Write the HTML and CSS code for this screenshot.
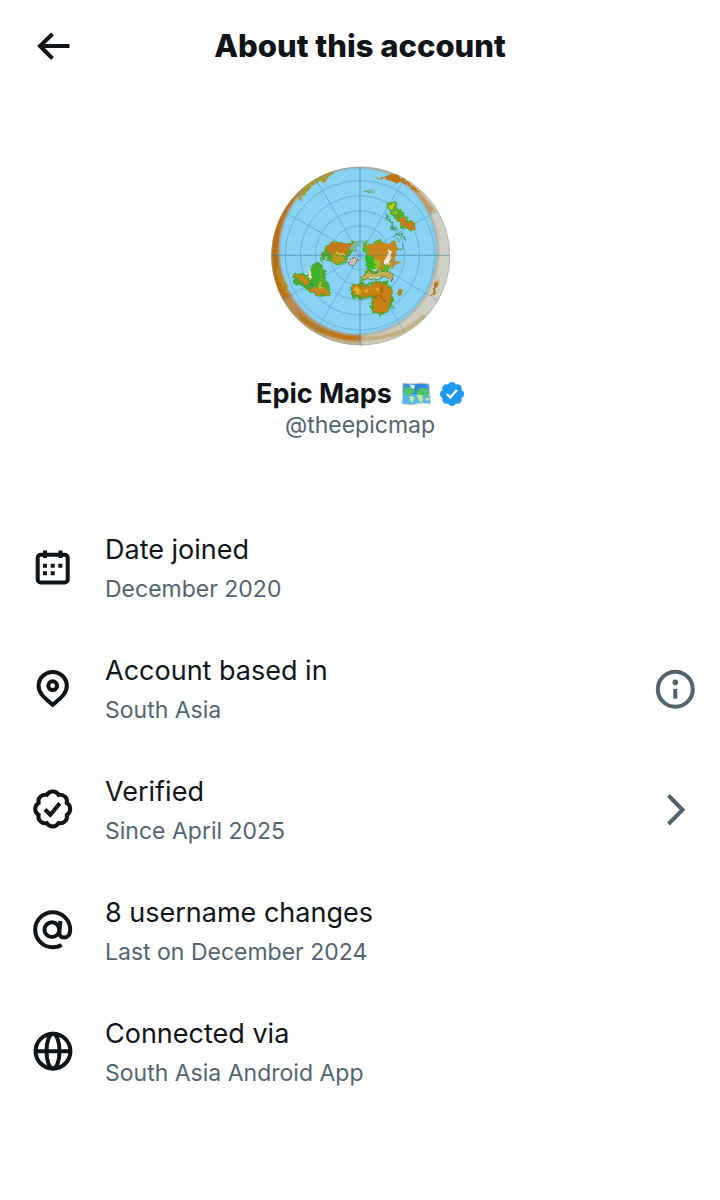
FILE: index.html
```html
<!DOCTYPE html>
<html lang="en">
<head>
<meta charset="utf-8">
<meta name="viewport" content="width=device-width, initial-scale=1">
<title>About this account</title>
<link rel="stylesheet" href="styles.css">
</head>
<body>
<header class="topbar">
  <button class="icon-button" type="button" aria-label="Back">
    <svg class="icon" viewBox="0 0 48 48" aria-hidden="true"><path d="M23.500 12 11 24l12.500 12.500M10.500 24h30"/></svg>
  </button>
  <h1 class="topbar-title">About this account</h1>
</header>
<main>
  <section class="profile">
    <svg class="avatar" viewBox="31 30 540 540" role="img" aria-label="Epic Maps profile picture">
      <defs>
        <clipPath id="disc"><circle cx="303" cy="300" r="268"/></clipPath>
        <filter id="soft" x="-5%" y="-5%" width="110%" height="110%"><feGaussianBlur stdDeviation="2.500"/></filter>
        <filter id="coast" x="-5%" y="-5%" width="110%" height="110%">
          <feTurbulence type="fractalNoise" baseFrequency=".06" numOctaves="2" seed="4" result="noise"/>
          <feDisplacementMap in="SourceGraphic" in2="noise" scale="22" xChannelSelector="R" yChannelSelector="G"/>
          <feGaussianBlur stdDeviation="1.500"/>
        </filter>
      </defs>
      <g clip-path="url(#disc)">
        <rect x="30" y="30" width="545" height="540" fill="#cfcfc3"/>
        <g filter="url(#soft)">
          <path d="M300 20H20V580H300L300 540 150 470 80 300Z" fill="#b98a48"/>
          <path d="M190 62C110 105 52 180 46 290c0 50 12 100 32 140" fill="none" stroke="#b9700f" stroke-width="22"/>
          <path d="M340 62c80 5 130 40 175 110" fill="none" stroke="#c79a62" stroke-width="26"/>
          <path d="M120 488c60 45 110 60 185 57" fill="none" stroke="#c1750f" stroke-width="20"/>
          <path d="M60 430c40 70 110 132 250 134" fill="none" stroke="#bdb896" stroke-width="12"/>
          <path d="M305 549c80 0 145-25 190-70" fill="none" stroke="#c4a878" stroke-width="12"/>
          <ellipse cx="296" cy="285" rx="238" ry="252" fill="#87d2f5" stroke="#a98f55" stroke-width="4"/>
        </g>
        <g filter="url(#coast)">
          <path d="M340 64l40 0 24-8 38 16 40 36-8 4-42-30-26-4-30-8z" fill="#bd7616"/>
          <path d="M200 50l30 0-38 24-26 8-46 52-6-6 20-40 30-28z" fill="#a79a32"/>
          <path d="M54 330l16 34 16 44 8 10-14-6-18-26-12-40z" fill="#b88a1c"/>
          <path d="M532 370l-20 54 12-8 12-36z" fill="#b77a19"/>
          <path d="M110 466l70 52 60 18-60-6-60-46z" fill="#a97c24"/>
        </g>
        <g fill="none" stroke="#4d99bd" stroke-width="2.500" opacity=".6">
          <circle cx="301" cy="298" r="44"/><circle cx="301" cy="298" r="89"/><circle cx="301" cy="298" r="134"/><circle cx="301" cy="298" r="179"/><circle cx="301" cy="298" r="224"/>
          <path d="M167 66 435 530M69 164 533 432M69 432 533 164M167 530 435 66"/>
          <path d="M301 30V568M33 298H572"/>
        </g>
        <g filter="url(#coast)">
          <path d="M194 282l8-18 24-8 30 4 30-6 12 8-8 12 6 6-14 10-10 4-6 14-10 12-12 8-22-8-18-2-4-18-4 14-8-8z" fill="#54a82f"/>
          <path d="M200 276l14-16 26 0 34 0 14 4-10 14-20 10-20 6-26 0z" fill="#c5791c"/>
          <path d="M214 298l32 0 8 14-10 10-24-6z" fill="#bd9a1f"/>
          <path d="M232 290l18-2 4 8-16 4z" fill="#d8bd28"/>
          <path d="M192 288l-8 18 2 14" fill="none" stroke="#5aaf6a" stroke-width="5"/>
          <path d="M268 322l14-16 12 2-6 14-14 6z" fill="#c9beb4" stroke="#97715f" stroke-width="3"/>
          <path d="M276 264l16-8 8 12-12 10 4 10-14 4-8-10 8-6z" fill="#75b99c"/>
          <path d="M302 262l18-8 10 8 22-10 20 10 26-4 14 14-2 24-14 20 14 10-12 10-10-4-8 20-20 2-8 14-24-2-24 14-4-12 18-12-6-12 16-10-8-24 4-14-14-12z" fill="#5fb22c"/>
          <path d="M316 262l22 4 22-6 44 0 8 20-6 30-14 20-24-6 0 18-22-10-4-24-14-12z" fill="#c9861d"/>
          <path d="M386 282l8 4-2 30-14 12-4-6 8-22z" fill="#eee8df"/>
          <path d="M318 294l18 6 10 22-12 22-14-10z" fill="#35b624"/>
          <path d="M342 312l16 2 4 18-14 10z" fill="#9ac027"/>
          <path d="M304 362l26-14 28 2 22-6 16 12 4 18-12-4-14-8-20 8-40 2z" fill="#c2ae50" stroke="#448d50" stroke-width="3"/>
          <path d="M388 320l18-12 14 14-14 6-8 12-10-8z" fill="#b2923c"/>
          <path d="M328 364l18 2 16-4M336 342l24 2" fill="none" stroke="#a9dff1" stroke-width="5"/>
          <path d="M270 402l6-16 24-6 24 4 20-6 36 0 16 12 0 22 6 24-4 22-16 16-24 2-20-8-6-20 4-20-12-6-22 6-18 0-12-12z" fill="#4fa22c"/>
          <path d="M276 398l8-10 38 0 22-6 38 2 10 16 4 36-6 22-14 12-22 0-14-10-4-20 6-16-16-8-24 4-20-4z" fill="#ca8017"/>
          <path d="M280 400l14-8 12 10-4 12-16 4zM316 400l12 2-4 12-12-2zM346 394l12 4-4 12z" fill="#e0b51c"/>
          <path d="M342 424l18-4 14 8 8 10M366 392l2 20" fill="none" stroke="#a36515" stroke-width="5"/>
          <ellipse cx="420" cy="410" rx="6" ry="9" fill="#a28e24"/>
          <path d="M380 146l18-10 12 8 4 12 14 4 10 20 16 14 12 10 2 16-14 10-24-14-14-20-14-14-14-14z" fill="#52ae2f"/>
          <path d="M386 146l14-4 6 12-12 8zM398 166l12 2 2 12z" fill="#d9c21e"/>
          <path d="M416 178l16 6 12 14 18 6 4 16-12 6-20-14-12-12z" fill="#c97c1c"/>
          <path d="M382 176l2 18 16 6-4 12 12 14M402 242l14-8 18 6 2 14M430 262l-6 16-14-2M412 246l6 12" fill="none" stroke="#3f9f6b" stroke-width="5"/>
          <path d="M308 108l16-8 20 2-12 4-14 2z" fill="#78a16b"/>
          <path d="M98 358l24-6 20 6 14-32 16-6 18 14 8 18 2 20 10 20 8 18-8 10-26 2-24-8-20-16-22-10-18-8z" fill="#4aac2d"/>
          <path d="M100 360l24-2 22 10 8 14-12 6-24-12zM146 400l26-10 24 6 16 16-4 6-34-2z" fill="#c98422"/>
          <path d="M148 338l10 12-4 18-10-6z" fill="#f0ddca"/>
          <path d="M164 332l14 6 0 14 12 22-12 10-14-16z" fill="#3bb52a"/>
          <path d="M186 340l6 30-6 6z" fill="#bfb524"/>
          <path d="M150 376l12 6-2 14-14-6z" fill="#229b4c"/>
          <path d="M174 382l14 0 10 16-20-4z" fill="#b9b827"/>
        </g>
        <path d="M301 30V568M33 298H572" stroke="#3f7180" stroke-width="2.500" opacity=".35"/>
      </g>
      <circle cx="303" cy="300" r="267" fill="none" stroke="#8d9e93" stroke-width="3" opacity=".5"/>
    </svg>
    <h2 class="name">
      <span>Epic Maps</span>
      <svg class="map-emoji" viewBox="0 0 30 24" role="img" aria-label="World map">
        <path d="M2 1l8 1 10-1 8 1 1.500 20-8.500-1-11 2-9-1z" fill="#5bb6ea"/>
        <path d="M2 1l8 1-.5 10L1.500 11zM20 1l8 1 .5 9-8.500 1z" fill="#3a92de"/>
        <path d="M10 2l10-1v11l-10.500 0z" fill="#2f86d6"/>
        <path d="M3 6l5-1 5 2 1 3-4 2-1 3-3-2-3-2zM15 10l4-4 8 1 1 5-3 3-3-2-4 1z" fill="#4cc569"/>
        <path d="M8 14l5 1-1 6-3-2zM16 13l5 0 1 4-2 4-3-4zM24 16l4 0-1 3-2-1z" fill="#bfe995"/>
        <path d="M9 3l5 0-1 4-3-1z" fill="#d4ecf6"/>
        <path d="M2 1l8 1 10-1 8 1 1.500 20-8.500-1-11 2-9-1z" fill="none" stroke="#c6d5dc"/>
      </svg>
      <svg class="badge" viewBox="0 0 24 24" role="img" aria-label="Verified account"><path fill="#1d9bf0" d="M8.100 2.600a4.200 4.200 0 0 1 7.800 0 4.200 4.200 0 0 1 5.500 5.500 4.200 4.200 0 0 1 0 7.800 4.200 4.200 0 0 1-5.500 5.500 4.200 4.200 0 0 1-7.800 0 4.200 4.200 0 0 1-5.500-5.500 4.200 4.200 0 0 1 0-7.800 4.200 4.200 0 0 1 5.500-5.500z"/><path d="M6.800 12l3.500 3.500 6.500-7.500" fill="none" stroke="#fff" stroke-width="2.400"/></svg>
    </h2>
    <p class="handle">@theepicmap</p>
  </section>
  <ul class="facts">
    <li class="fact">
      <svg class="icon" viewBox="0 0 48 48" aria-hidden="true"><rect x="8.700" y="10.700" width="30" height="27.800" rx="3"/><path d="M16 6.500v7.500M31.500 6.500v7.500"/><path class="solid" d="M14 19.700h4v4h-4zM21.700 19.700h4v4h-4zM29.300 19.700h4v4h-4zM14 27.300h4v4h-4zM21.700 27.300h4v4h-4z"/></svg>
      <div class="fact-text"><h3 class="fact-title">Date joined</h3><p class="fact-detail">December 2020</p></div>
    </li>
    <li class="fact">
      <svg class="icon" viewBox="0 0 48 48" aria-hidden="true"><path d="M23.700 39.800C16.500 33.800 9.600 28.800 9.600 21a14.100 14.100 0 0 1 28.200 0c0 7.800-6.900 12.800-14.100 18.800z"/><circle cx="23.700" cy="20.700" r="4.400"/></svg>
      <div class="fact-text"><h3 class="fact-title">Account based in</h3><p class="fact-detail">South Asia</p></div>
      <button class="icon-button" type="button" aria-label="About account location">
        <svg class="icon muted" viewBox="0 0 48 48" aria-hidden="true"><circle cx="24.300" cy="24.200" r="17.500"/><circle class="solid" cx="24.300" cy="17.400" r="2.800"/><path d="M24.300 23.800v9.900"/></svg>
      </button>
    </li>
    <li class="fact">
      <svg class="icon" viewBox="0 0 48 48" aria-hidden="true"><path d="M17.800 8.900a6.800 6.800 0 0 1 11.800 0 6.800 6.800 0 0 1 8.200 8.200 6.800 6.800 0 0 1 0 11.800 6.800 6.800 0 0 1-8.200 8.200 6.800 6.800 0 0 1-11.800 0 6.800 6.800 0 0 1-8.200-8.200 6.800 6.800 0 0 1 0-11.800 6.800 6.800 0 0 1 8.200-8.200z"/><path d="M16 23.500l5.300 5.200 9.500-11.300"/></svg>
      <div class="fact-text"><h3 class="fact-title">Verified</h3><p class="fact-detail">Since April 2025</p></div>
      <button class="icon-button" type="button" aria-label="Verification details">
        <svg class="icon muted" viewBox="0 0 48 48" aria-hidden="true"><path d="M17.500 9.500l14 14.300-14 14.200"/></svg>
      </button>
    </li>
    <li class="fact">
      <svg class="icon" viewBox="0 0 48 48" aria-hidden="true"><circle cx="22.900" cy="22.700" r="7.400"/><path d="M31.400 14l-1 10.200c-.5 4.200 1.300 6.300 4.600 6.300 4 0 6.200-3.300 6.200-7.800A17.500 17.500 0 1 0 23.700 40.200c3.400 0 6.200-.7 9-2.300"/></svg>
      <div class="fact-text"><h3 class="fact-title">8 username changes</h3><p class="fact-detail">Last on December 2024</p></div>
    </li>
    <li class="fact">
      <svg class="icon" viewBox="0 0 48 48" aria-hidden="true"><circle cx="24" cy="23.200" r="17.400"/><ellipse cx="24" cy="23.200" rx="6.500" ry="17.400"/><path d="M6.600 23.200h34.800"/></svg>
      <div class="fact-text"><h3 class="fact-title">Connected via</h3><p class="fact-detail">South Asia Android App</p></div>
    </li>
  </ul>
</main>
</body>
</html>
```
FILE: styles.css
```css
* {
  box-sizing: border-box;
}

body,
h1,
h2,
h3,
p,
ul {
  margin: 0;
  padding: 0;
}

body {
  background: #fff;
  color: #0f1419;
  font-family: Inter, "Liberation Sans", sans-serif;
}

.topbar {
  display: grid;
  grid-template-columns: 48px 1fr 48px;
  align-items: center;
  min-height: 92px;
  padding: 0 29px;
}

.topbar-title {
  font-size: 31px;
  font-weight: 800;
  line-height: 40px;
  text-align: center;
}

.icon-button {
  display: block;
  padding: 0;
  border: 0;
  background: none;
  color: inherit;
  cursor: pointer;
}

.icon {
  display: block;
  flex: none;
  width: 48px;
  height: 48px;
  fill: none;
  stroke: currentColor;
  stroke-width: 4;
}

.icon .solid {
  fill: currentColor;
  stroke: none;
}

.muted {
  color: #536471;
}

.profile {
  display: flex;
  flex-direction: column;
  align-items: center;
  padding: 74px 24px 90px;
}

.avatar {
  width: 180px;
  height: 180px;
}

.name {
  display: flex;
  align-items: center;
  gap: 9px;
  margin-top: 31px;
  font-size: 27px;
  font-weight: 700;
  line-height: 34px;
}

.map-emoji {
  width: 30px;
  height: 24px;
}

.badge {
  width: 24px;
  height: 24px;
}

.handle {
  color: #536471;
  font-size: 23px;
  line-height: 28px;
}

.facts {
  display: flex;
  flex-direction: column;
  gap: 43px;
  padding: 0 21px 40px 29px;
  list-style: none;
}

.fact {
  display: flex;
  align-items: center;
  gap: 28px;
}

.fact-text {
  flex: 1;
}

.fact-title {
  font-size: 27px;
  font-weight: 400;
  line-height: 42px;
}

.fact-detail {
  color: #536471;
  font-size: 23px;
  line-height: 36px;
}
```
